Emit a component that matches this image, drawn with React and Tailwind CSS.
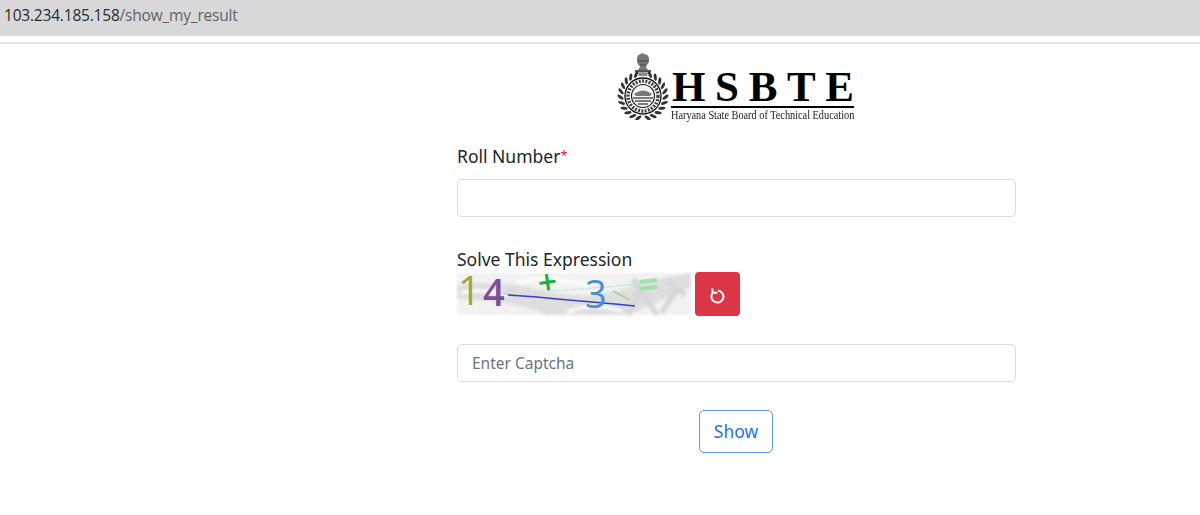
const FONT = { fontFamily: '"Noto Sans", sans-serif' };

const LEAVES = Array.from({ length: 22 }, (_, i) => {
  // two laurel branches up both sides of the seal, open at the top
  const side = i < 11 ? -1 : 1;
  const step = i < 11 ? i : i - 11;
  const deg = side * (12 + step * 15);
  return { key: i, deg };
});

// Emblem next to the HSBTE wordmark
function Emblem() {
  return (
    <svg width="52" height="68" viewBox="0 0 52 68" className="shrink-0 blur-[0.4px]">
      {/* lion capital */}
      <path d="M20 6 C21 1 24 3 25 1 C27 3 31 1 32 6 L32 10 C30 13 29 14 29 15 L31 18 L21 18 L23 15 C23 14 21 13 20 10 Z" fill="#777" />
      <path d="M21 9 H31 M23 13 H29" stroke="#444" strokeWidth="1" />
      <rect x="18" y="18" width="16" height="2.5" fill="#555" />
      <path d="M21 21 H31 L30 24 H22 Z" fill="#888" />
      {/* laurel wreath */}
      <g transform="translate(26 44)">
        {LEAVES.map((l) => (
          <ellipse key={l.key} cx="0" cy="22.5" rx="1.5" ry="3.6" fill="#333" transform={`rotate(${l.deg}) rotate(${l.deg > 0 ? 40 : -40} 0 22.5)`} />
        ))}
      </g>
      {/* seal */}
      <circle cx="26" cy="44" r="18" fill="#fff" stroke="#111" strokeWidth="1.3" />
      <circle cx="26" cy="44" r="15" fill="none" stroke="#444" strokeWidth="3.5" strokeDasharray="2 1.3" />
      <circle cx="26" cy="44" r="11.5" fill="#f2f2f2" stroke="#222" strokeWidth="1.2" />
      <path d="M17 42 Q26 35 35 42 L33 44 H19 Z" fill="#777" />
      <path d="M16 46 H36 M18 49 H34 M21 52 H31" stroke="#555" strokeWidth="1.3" />
    </svg>
  );
}

function Logo() {
  return (
    <div className="flex items-start pl-[160px] h-[70px]">
      <Emblem />
      <div className="ml-[2px] w-[183px] pt-[17px]" style={{ fontFamily: '"Liberation Serif", serif' }}>
        <div className="flex justify-between text-[43px] leading-[36px] font-bold text-black h-[37px] pl-[1px]">
          <span>H</span><span>S</span><span>B</span><span>T</span><span>E</span>
        </div>
        <div className="h-[2px] bg-black" />
        <div className="mt-[1px] text-[12px] leading-[13px] text-[#222] whitespace-nowrap origin-left scale-x-[0.857]">
          Haryana State Board of Technical Education
        </div>
      </div>
    </div>
  );
}

// Captcha picture: noisy grey backdrop with the expression on top
function Captcha() {
  return (
    <svg width="234" height="42" viewBox="0 0 234 42" className="shrink-0 overflow-visible">
      <g className="blur-[1.5px]">
        <rect width="234" height="42" fill="#f2f2f2" />
        <path d="M0 12 Q40 6 90 18 T180 10 L234 0 V14 Q200 30 170 42 H90 Q50 26 0 26 Z" fill="#dedede" />
        <path d="M60 10 Q90 2 130 12 M4 20 Q30 14 50 24 M110 40 Q130 28 165 38" fill="none" stroke="#fff" strokeWidth="3" />
        <path d="M172 42 L184 14 M200 42 L186 20 L176 6 M204 40 L222 14 M210 8 L228 22" fill="none" stroke="#d6d6d6" strokeWidth="5" />
      </g>
      <path d="M94 18 L150 14 L195 9" fill="none" stroke="#bfe6e6" strokeWidth="1.2" />
      <path d="M44 20 L56 22" stroke="#9ecb9e" strokeWidth="1" />
      <path d="M51 22 L80 24 L100 26 L135 29 L158 31 L178 33" fill="none" stroke="#3340c8" strokeWidth="1.3" />
      <path d="M156 18 L173 27" stroke="#8fd06a" strokeWidth="1.4" />
      <g style={{ fontFamily: '"Open Sans", sans-serif' }}>
        <text x="1" y="32" fontSize="40" fill="#a3a33f">1</text>
        <text x="26" y="33" fontSize="38" fill="#7a4f96" fontWeight="600">4</text>
        <text x="81" y="21" fontSize="34" fill="#1fae3f" fontWeight="600" transform="rotate(-8 92 11)">+</text>
        <text x="128" y="35" fontSize="38" fill="#4a8fd0" fontWeight="500">3</text>
        <text x="181" y="24" fontSize="36" fill="#9be6a6" fontWeight="700" transform="rotate(-6 191 9)">=</text>
      </g>
    </svg>
  );
}

export default function App() {
  return (
    <div className="min-h-screen bg-white text-[#212529]" style={FONT}>
      {/* Address bar */}
      <div className="h-[36px] bg-[#d8d8da] flex items-center pl-[4px] pb-[4px] text-[15.5px] whitespace-nowrap" style={{ fontFamily: '"Open Sans", sans-serif' }}>
        <span className="text-[#2b2b2b] tracking-[-0.2px]">103.234.185.158</span>
        <span className="text-[#5f6368] tracking-[-0.2px]">/show_my_result</span>
      </div>
      <div className="mt-[6px] h-[2px] bg-[#e4e4e4]" />

      <main className="ml-[457px] w-[559px]">
        <div className="pt-[8px]">
          <Logo />
        </div>

        <div className="mt-[21px] text-[17.5px] leading-[26px]">
          Roll Number<span className="relative top-[-3px] text-[13px] text-[#c2255c]">*</span>
        </div>
        <input
          type="text"
          className="mt-[8px] block w-full h-[38px] rounded-[5px] border border-[#d8dce0] bg-white px-[14px] outline-none"
        />

        <div className="mt-[29px] text-[17.5px] leading-[26px]">Solve This Expression</div>
        <div className="flex items-start">
          <div className="pt-[1px]">
            <Captcha />
          </div>
          <button className="ml-[4px] w-[45px] h-[44px] rounded-[4px] bg-[#dc3545] flex items-center justify-center text-white">
            <svg width="15" height="17" viewBox="0 0 15 17" fill="none" stroke="currentColor" strokeWidth="2" className="mt-[2px]">
              <path d="M8 3.6 A6 6 0 1 1 2.6 6" />
              <path d="M2.2 1.5 L2.8 6 L7.4 5.4" />
            </svg>
          </button>
        </div>

        <input
          type="text"
          placeholder="Enter Captcha"
          className="mt-[28px] block w-full h-[38px] rounded-[5px] border border-[#d8dce0] bg-white px-[14px] text-[15.5px] outline-none placeholder:text-[#6c757d]"
        />

        <div className="mt-[28px] pr-[2px] flex justify-center">
          <button className="w-[74px] h-[43px] rounded-[5px] border border-[#5b9be6] bg-white text-[#1a73e8] text-[17.5px] pl-[1px]">
            Show
          </button>
        </div>
      </main>
    </div>
  );
}
